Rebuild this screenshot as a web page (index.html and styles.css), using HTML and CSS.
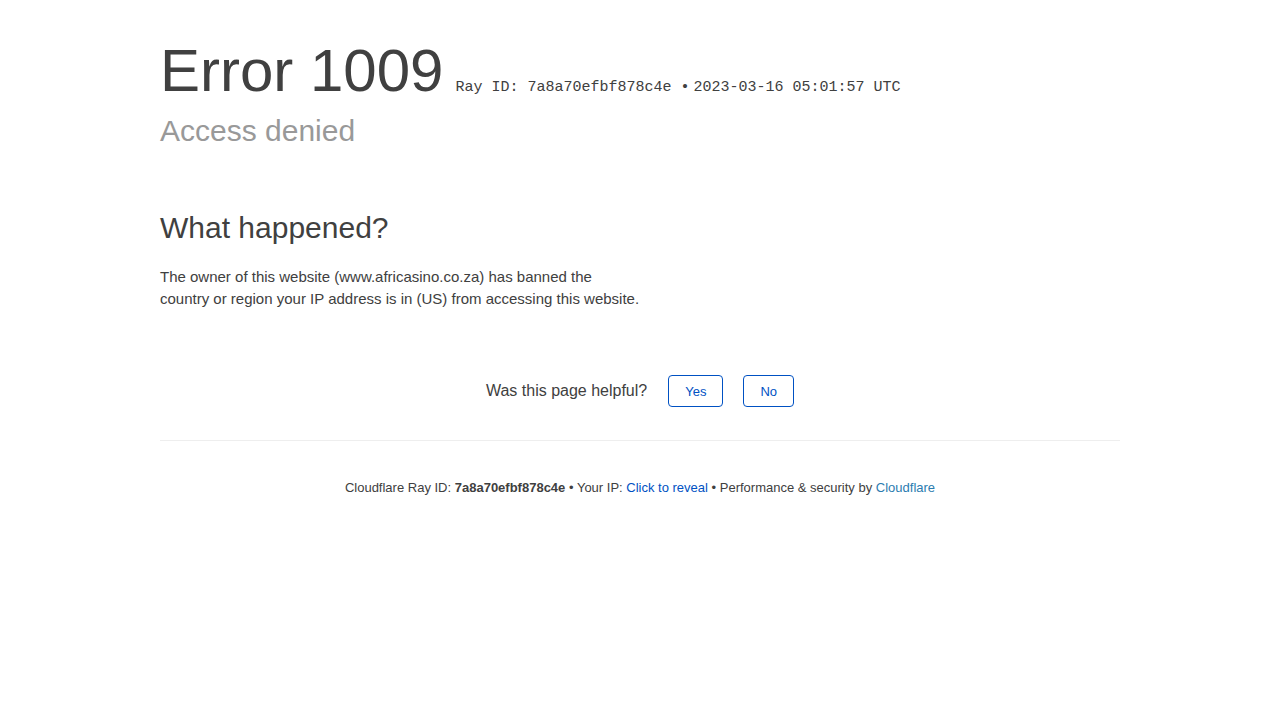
FILE: index.html
```html
<!DOCTYPE html>
<html lang="en-US">
<head>
  <meta charset="UTF-8">
  <title>Access denied | www.africasino.co.za used Cloudflare to restrict access</title>
  <link rel="stylesheet" href="styles.css">
</head>
<body>
  <div class="wrapper">
    <div class="header">
      <h1 class="title">
        <span class="code">Error 1009</span>
        <small class="ray">Ray ID: 7a8a70efbf878c4e &bull;</small>
        <small class="ray">2023-03-16 05:01:57 UTC</small>
      </h1>
      <h2 class="subtitle">Access denied</h2>
    </div>

    <div class="section">
      <h2 class="sectionTitle">What happened?</h2>
      <p class="desc">The owner of this website (www.africasino.co.za) has banned the country or region your IP address is in (US) from accessing this website.</p>
    </div>

    <div class="feedback">
      <span class="question">Was this page helpful?</span>
      <button class="feedbackBtn">Yes</button>
      <button class="feedbackBtn">No</button>
    </div>

    <div class="footer">
      <span>Cloudflare Ray ID: <strong>7a8a70efbf878c4e</strong></span>
      <span class="sep">&bull;</span>
      <span>Your IP: <a class="link" href="#">Click to reveal</a></span>
      <span class="sep">&bull;</span>
      <span>Performance &amp; security by <a class="link light" href="#">Cloudflare</a></span>
    </div>
  </div>
</body>
</html>
```

FILE: styles.css
```css
* {
  margin: 0;
  padding: 0;
  box-sizing: border-box;
}

body {
  font-family: "Liberation Sans", Arial, sans-serif;
  color: #404040;
  background: #fff;
}

.wrapper {
  width: 960px;
  margin: 0 auto;
  padding-top: 41px;
}

.title {
  display: flex;
  align-items: baseline;
  font-weight: 400;
}

.code {
  font-size: 60px;
  line-height: 60px;
  margin-right: 12px;
}

.ray {
  font-family: "Liberation Mono", "Courier New", monospace;
  font-size: 15px;
  color: #404040;
  margin-right: 4px;
}

.subtitle {
  font-size: 30px;
  font-weight: 300;
  color: #999;
  line-height: 40px;
  margin-top: 10px;
}

.section {
  margin-top: 57px;
  width: 480px;
}

.sectionTitle {
  font-size: 30px;
  font-weight: 400;
  line-height: 40px;
}

.desc {
  font-size: 15px;
  line-height: 22px;
  margin-top: 18px;
}

.feedback {
  display: flex;
  justify-content: center;
  align-items: center;
  gap: 20px;
  margin-top: 65px;
  padding-bottom: 33px;
  border-bottom: 1px solid #eee;
}

.question {
  font-size: 16px;
  margin-right: 1px;
}

.feedbackBtn {
  font-family: "Liberation Sans", Arial, sans-serif;
  font-size: 13px;
  color: #0051c3;
  background: #fff;
  border: 1px solid #0051c3;
  border-radius: 4px;
  padding: 0 16px;
  height: 32px;
  cursor: pointer;
}

.footer {
  text-align: center;
  font-size: 13px;
  margin-top: 39px;
}

.link {
  color: #0051c3;
  text-decoration: none;
}

.link.light {
  color: #2c7cb0;
}
```
